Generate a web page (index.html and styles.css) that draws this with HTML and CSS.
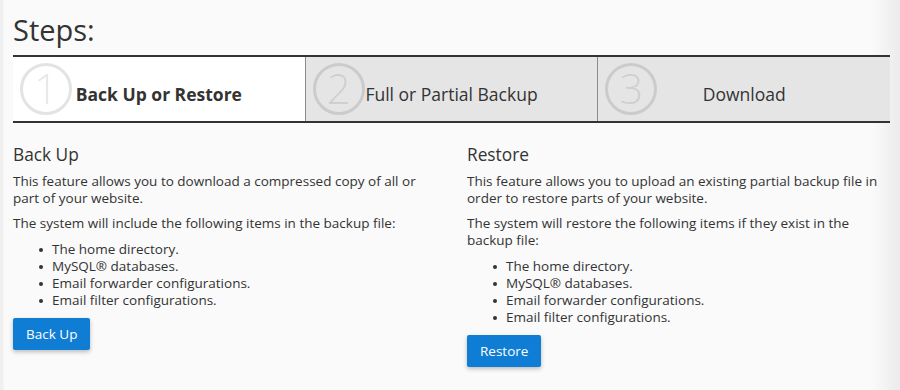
FILE: index.html
```html
<!DOCTYPE html>
<html lang="en">
<head>
	<meta charset="UTF-8">
	<title>Backup Wizard</title>
	<link rel="stylesheet" href="styles.css">
</head>
<body>
	<div class="page">
		<h1 class="title">Steps:</h1>
		<div class="steps">
			<div class="step current">
				<span class="num">1</span>
				<span class="label">Back Up or Restore</span>
			</div>
			<div class="step">
				<span class="num">2</span>
				<span class="label">Full or Partial Backup</span>
			</div>
			<div class="step">
				<span class="num">3</span>
				<span class="label">Download</span>
			</div>
		</div>

		<div class="cols">
			<div class="col">
				<h2>Back Up</h2>
				<p>This feature allows you to download a compressed copy of all or part of your website.</p>
				<p>The system will include the following items in the backup file:</p>
				<ul>
					<li>The home directory.</li>
					<li>MySQL® databases.</li>
					<li>Email forwarder configurations.</li>
					<li>Email filter configurations.</li>
				</ul>
				<button class="btn">Back Up</button>
			</div>
			<div class="col">
				<h2>Restore</h2>
				<p>This feature allows you to upload an existing partial backup file in order to restore parts of your website.</p>
				<p>The system will restore the following items if they exist in the backup file:</p>
				<ul>
					<li>The home directory.</li>
					<li>MySQL® databases.</li>
					<li>Email forwarder configurations.</li>
					<li>Email filter configurations.</li>
				</ul>
				<button class="btn">Restore</button>
			</div>
		</div>
	</div>
</body>
</html>
```

FILE: styles.css
```css
*{margin:0;padding:0;box-sizing:border-box;}
ul{list-style:none;}
html,body{height:100%;}
body{font-family:"Open Sans","Liberation Sans",sans-serif;color:#333;background:linear-gradient(to right,#f0f0f0 0,#f0f0f0 3px,#fafafa 4px,#fafafa 872px,#ebebeb 900px);}
.page{padding:12px 10px 0 13px;}
.title{font-size:29px;font-weight:400;line-height:36px;margin-bottom:7px;}
.steps{display:flex;border-top:2px solid #333;border-bottom:2px solid #333;height:68px;}
.step{flex:1;display:grid;grid-template-columns:52px 1fr 52px;align-items:center;padding:0 7px;background:#e5e5e5;border-left:1px solid #8a8a8a;}
.step:first-child{border-left:none;}
.step.current{background:#fff;}
.step .num{width:52px;height:52px;border:3px solid rgba(0,0,0,.11);border-radius:50%;color:rgba(0,0,0,.11);font-size:42px;font-weight:300;line-height:44px;text-align:center;}
.step .label{text-align:center;font-size:17.5px;white-space:nowrap;padding-top:9px;}
.step.current .label{font-weight:700;}
.cols{display:grid;grid-template-columns:1fr 1fr;column-gap:31px;padding-top:20px;}
.col h2{font-size:17.3px;font-weight:400;line-height:24px;margin-bottom:6px;}
.col p{font-size:13.5px;line-height:17px;margin-bottom:8px;}
.col ul{font-size:13.5px;line-height:17px;margin:9px 0 9px 39px;}
.col li{position:relative;}
.col li:before{content:"";position:absolute;left:-13px;top:7px;width:4px;height:4px;border-radius:50%;background:#333;}
.btn{font-family:inherit;font-size:13.5px;color:#fff;background:#0f7dd4;border:none;border-radius:2px;height:32px;padding:0 13px;box-shadow:0 2px 4px rgba(0,0,0,.25);}
```
